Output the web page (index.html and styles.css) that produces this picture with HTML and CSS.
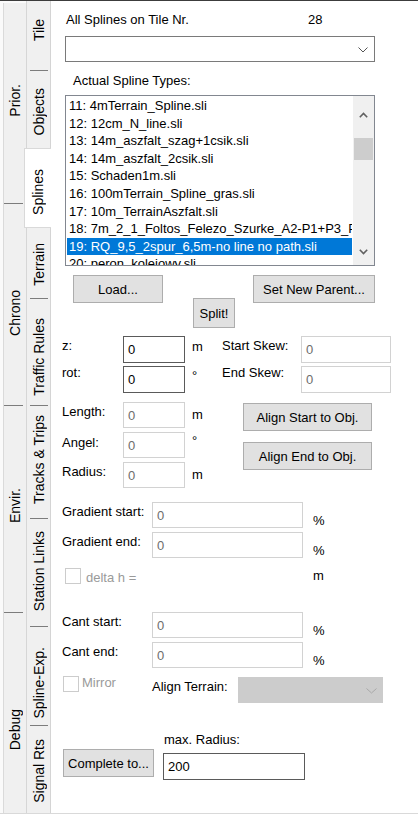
FILE: index.html
```html
<!DOCTYPE html>
<html>
<head>
<meta charset="utf-8">
<title>Splines</title>
<link rel="stylesheet" href="styles.css">
</head>
<body>
<div class="app">
  <div class="outer">
    <div class="otab t-prior"><span class="vt">Prior.</span></div>
    <div class="otab t-chrono"><span class="vt">Chrono</span></div>
    <div class="otab t-envir"><span class="vt">Envir.</span></div>
    <div class="otab t-debug"><span class="vt">Debug</span></div>
  </div>
  <div class="inner">
    <div class="itab t-tile"><span class="vt">Tile</span></div>
    <div class="itab t-objects"><span class="vt">Objects</span></div>
    <div class="itab t-splines selected"><span class="vt">Splines</span></div>
    <div class="itab t-terrain"><span class="vt">Terrain</span></div>
    <div class="itab t-traffic"><span class="vt">Traffic Rules</span></div>
    <div class="itab t-tracks"><span class="vt">Tracks &amp; Trips</span></div>
    <div class="itab t-station"><span class="vt">Station Links</span></div>
    <div class="itab t-splexp"><span class="vt">Spline-Exp.</span></div>
    <div class="itab t-signal"><span class="vt">Signal Rts</span></div>
  </div>

  <div class="panel">
    <div class="title"><span class="title-text">All Splines on Tile Nr.</span><span>28</span></div>

    <div class="combo">
      <svg class="chev" width="10" height="6" viewBox="0 0 10 6"><polyline points="0.5,0.5 5,5 9.5,0.5" fill="none" stroke="#555" stroke-width="1"/></svg>
    </div>

    <div class="caption">Actual Spline Types:</div>

    <div class="list">
      <div class="items">
        <div class="item">11: 4mTerrain_Spline.sli</div>
        <div class="item">12: 12cm_N_line.sli</div>
        <div class="item">13: 14m_aszfalt_szag+1csik.sli</div>
        <div class="item">14: 14m_aszfalt_2csik.sli</div>
        <div class="item">15: Schaden1m.sli</div>
        <div class="item">16: 100mTerrain_Spline_gras.sli</div>
        <div class="item">17: 10m_TerrainAszfalt.sli</div>
        <div class="item">18: 7m_2_1_Foltos_Felezo_Szurke_A2-P1+P3_P4.sli</div>
        <div class="item sel">19: RQ_9,5_2spur_6,5m-no line no path.sli</div>
        <div class="item">20: peron_kolejowy.sli</div>
      </div>
      <div class="scroll">
        <div class="arrow up">
          <svg width="9" height="6" viewBox="0 0 9 6"><polyline points="0.8,5.2 4.5,1.5 8.2,5.2" fill="none" stroke="#606060" stroke-width="1.6"/></svg>
        </div>
        <div class="thumb"></div>
        <div class="arrow down">
          <svg width="9" height="6" viewBox="0 0 9 6"><polyline points="0.8,0.8 4.5,4.5 8.2,0.8" fill="none" stroke="#606060" stroke-width="1.6"/></svg>
        </div>
      </div>
    </div>

    <div class="btnrow">
      <div class="btn b-load">Load...</div>
      <div class="btn b-split">Split!</div>
      <div class="btn b-parent">Set New Parent...</div>
    </div>

    <div class="row row-z">
      <div class="lbl w61 pt2">z:</div>
      <div class="tb on w62 h27">0</div>
      <div class="unit u30 pt3">m</div>
      <div class="lbl w79 pt2">Start Skew:</div>
      <div class="tb w90 h27">0</div>
    </div>

    <div class="row row-rot">
      <div class="lbl w61 up1">rot:</div>
      <div class="tb on w62 h27">0</div>
      <div class="unit u30 pt2">°</div>
      <div class="lbl w79 up1">End Skew:</div>
      <div class="tb w90 h27">0</div>
    </div>

    <div class="geo">
      <div class="geo-left">
        <div class="row">
          <div class="lbl w61 pt2">Length:</div>
          <div class="tb w62 h26">0</div>
          <div class="unit pt5">m</div>
        </div>
        <div class="row">
          <div class="lbl w61 pt3">Angel:</div>
          <div class="tb w62 h26">0</div>
          <div class="unit pt1">°</div>
        </div>
        <div class="row">
          <div class="lbl w61 pt2">Radius:</div>
          <div class="tb w62 h26">0</div>
          <div class="unit pt5">m</div>
        </div>
      </div>
      <div class="geo-right">
        <div class="btn b-align1">Align Start to Obj.</div>
        <div class="btn b-align2">Align End to Obj.</div>
      </div>
    </div>

    <div class="row row-g1">
      <div class="lbl w90 pt2">Gradient start:</div>
      <div class="tb w151 h26">0</div>
      <div class="unit pct">%</div>
    </div>
    <div class="row row-g2">
      <div class="lbl w90 pt2">Gradient end:</div>
      <div class="tb w151 h26">0</div>
      <div class="unit pct">%</div>
    </div>

    <div class="row row-delta">
      <div class="cb cb-delta"></div>
      <div class="dis delta-text pt2">delta h =</div>
      <div class="unit">m</div>
    </div>

    <div class="row row-c1">
      <div class="lbl w90 pt2">Cant start:</div>
      <div class="tb w151 h26">0</div>
      <div class="unit pct">%</div>
    </div>
    <div class="row row-c2">
      <div class="lbl w90 pt2">Cant end:</div>
      <div class="tb w151 h26">0</div>
      <div class="unit pct">%</div>
    </div>

    <div class="row row-mirror">
      <div class="cb cb-mirror"></div>
      <div class="dis mirror-text">Mirror</div>
      <div class="lbl w86 pt3">Align Terrain:</div>
      <div class="combo-dis">
        <svg width="11" height="6" viewBox="0 0 11 6"><polyline points="0.5,0.5 5.5,5 10.5,0.5" fill="none" stroke="#a8a8a8" stroke-width="1"/></svg>
      </div>
    </div>

    <div class="maxrad">max. Radius:</div>

    <div class="row row-complete">
      <div class="btn b-complete">Complete to...</div>
      <div class="tb on w142 h27 tb-rad">200</div>
    </div>
  </div>
</div>
</body>
</html>
```

FILE: styles.css
```css
html, body {
  margin: 0;
  padding: 0;
  background: #ffffff;
}

body {
  font-family: "Liberation Sans", Arial, sans-serif;
  font-size: 13px;
  line-height: 15px;
  color: #000000;
}

.app {
  display: flex;
  height: 814px;
  box-sizing: border-box;
  border-top: 1px solid #3c3c3c;
  border-bottom: 1px solid #d9d9d9;
}

/* ---------- vertical tab strips ---------- */
.vt {
  display: block;
  writing-mode: vertical-rl;
  transform: rotate(180deg);
  line-height: 1;
  font-size: 14px;
  white-space: nowrap;
}

.outer {
  width: 27px;
  flex: none;
  box-sizing: border-box;
  padding-top: 2px;
  padding-left: 3px;
  border-right: 1px solid #d6d6d6;
  display: flex;
  flex-direction: column;
  background: #fafafa;
}

.otab {
  position: relative;
  background: #f0f0f0;
  border-left: 1px solid #dadada;
  display: flex;
  align-items: center;
  justify-content: center;
  box-sizing: border-box;
}

.otab + .otab::before,
.itab + .itab::before {
  content: "";
  position: absolute;
  top: 0;
  height: 1px;
  background: #7c7c7c;
}

.otab + .otab::before {
  left: 0;
  right: 3px;
}

.t-prior  { height: 200px; padding-bottom: 6px; }
.t-chrono { height: 202px; padding-top: 18px; }
.t-envir  { height: 207px; padding-bottom: 6px; }
.t-debug  { flex: 1; padding-top: 34px; }

.inner {
  width: 23px;
  flex: none;
  box-sizing: border-box;
  padding-top: 2px;
  display: flex;
  flex-direction: column;
  background: #f0f0f0;
}

.itab {
  position: relative;
  display: flex;
  align-items: center;
  justify-content: center;
  box-sizing: border-box;
}

.itab + .itab::before {
  left: 3px;
  right: 2px;
}

.t-tile    { height: 67px; padding-bottom: 13px; }
.t-objects { height: 78px; padding-top: 6px; }
.t-splines { height: 80px; padding-top: 8px; }
.t-terrain { height: 70px; padding-top: 2px; }
.t-traffic { height: 107px; padding-top: 11px; }
.t-tracks  { height: 113px; padding-bottom: 5px; }
.t-station { height: 108px; padding-bottom: 2px; }
.t-splexp  { height: 99px; padding-top: 15px; }
.t-signal  { flex: 1; padding-top: 4px; }

.itab.selected {
  background: #ffffff;
  margin-left: -3px;
  margin-right: -1px;
  border: 1px solid #d9d9d9;
  border-right: none;
  z-index: 2;
}

.itab.selected::before,
.itab.selected + .itab::before {
  display: none;
}

/* ---------- main panel ---------- */
.panel {
  flex: 1;
  border-left: 1px solid #d4d4d4;
  padding-top: 11px;
  padding-left: 11px;
  box-sizing: border-box;
}

.title {
  display: flex;
  height: 15px;
  margin-left: 4px;
}

.title-text {
  width: 242px;
}

.combo {
  margin-top: 9px;
  margin-left: 3px;
  width: 310px;
  height: 26px;
  box-sizing: border-box;
  border: 1px solid #7a7a7a;
  display: flex;
  align-items: center;
  justify-content: flex-end;
  padding-right: 6px;
  padding-top: 1px;
}

.caption {
  margin-top: 11px;
  margin-left: 11px;
  height: 15px;
}

/* list box */
.list {
  margin-top: 7px;
  margin-left: 3px;
  width: 310px;
  height: 171px;
  box-sizing: border-box;
  border: 1px solid #828790;
  display: flex;
  overflow: hidden;
}

.items {
  flex: 1;
  min-width: 0;
  padding: 1px 1px 0 1px;
  overflow: hidden;
}

.item {
  height: 17.6px;
  line-height: 17.6px;
  padding-left: 2px;
  white-space: nowrap;
  overflow: hidden;
}

.item.sel {
  background: #0078d7;
  color: #ffffff;
}

.scroll {
  width: 21px;
  flex: none;
  background: #f0f0f0;
  display: flex;
  flex-direction: column;
  align-items: center;
}

.arrow {
  width: 100%;
  display: flex;
  align-items: center;
  justify-content: center;
}

.arrow.up {
  height: 38px;
}

.arrow.down {
  height: 25px;
  margin-top: auto;
  padding-bottom: 1px;
}

.thumb {
  margin-top: 4px;
  width: 19px;
  height: 22px;
  background: #cdcdcd;
}

/* buttons */
.btn {
  box-sizing: border-box;
  background: #e1e1e1;
  border: 1px solid #adadad;
  display: flex;
  align-items: center;
  justify-content: center;
  white-space: nowrap;
}

.btnrow {
  margin-top: 9px;
  margin-left: 11px;
  height: 53px;
  display: flex;
  align-items: flex-start;
}

.b-load   { width: 90px; height: 28px; }
.b-split  { width: 42px; height: 30px; margin-left: 30px; margin-top: 23px; }
.b-parent { width: 122px; height: 28px; margin-left: 18px; }

/* generic rows */
.row {
  display: flex;
  align-items: flex-start;
}

.lbl { flex: none; white-space: nowrap; }
.w61 { width: 61px; }
.w79 { width: 79px; }
.w86 { width: 86px; }
.w90 { width: 90px; }

.pt1 { padding-top: 1px; }
.pt2 { padding-top: 2px; }
.pt3 { padding-top: 3px; }
.pt5 { padding-top: 5px; }
.up1 { margin-top: -1px; }

.tb {
  flex: none;
  box-sizing: border-box;
  border: 1px solid #d2d2d2;
  background: #ffffff;
  color: #6d6d6d;
  padding-left: 4px;
  display: flex;
  align-items: center;
}

.tb.on {
  border-color: #5a5a5a;
  color: #000000;
}

.w62  { width: 62px; }
.w90.tb { width: 90px; }
.w142 { width: 142px; }
.w151 { width: 151px; }
.h26  { height: 26px; }
.h27  { height: 27px; }

.unit {
  flex: none;
  margin-left: 7px;
}

.u30 { width: 30px; }

.pct {
  margin-left: 10px;
  padding-top: 11px;
}

.row-z     { margin-top: 8px; height: 27px; }
.row-rot   { margin-top: 3px; height: 27px; }

.geo {
  margin-top: 9px;
  display: flex;
}

.geo-left {
  width: 181px;
  display: flex;
  flex-direction: column;
  gap: 4px;
}

.geo-left .row { height: 26px; }

.geo-right {
  display: flex;
  flex-direction: column;
}

.b-align1 { width: 129px; height: 28px; margin-top: 1px; }
.b-align2 { width: 129px; height: 28px; margin-top: 11px; }

.row-g1 { margin-top: 14px; height: 26px; }
.row-g2 { margin-top: 4px; height: 26px; }

.cb {
  flex: none;
  box-sizing: border-box;
  border: 1px solid #cccccc;
  background: #ffffff;
}

.dis { color: #9a9a9a; flex: none; }

.row-delta { margin-top: 10px; height: 16px; }
.cb-delta { width: 16px; height: 16px; margin-left: 3px; }
.delta-text { margin-left: 5px; width: 227px; }
.row-delta .unit { margin-left: 0; }

.row-c1 { margin-top: 28px; height: 26px; }
.row-c2 { margin-top: 4px; height: 26px; }

.row-mirror { margin-top: 8px; height: 27px; }
.cb-mirror { width: 16px; height: 16px; margin-left: 1px; }
.mirror-text { margin-left: 3px; width: 70px; margin-top: -1px; }

.combo-dis {
  flex: none;
  width: 145px;
  height: 26px;
  margin-top: 1px;
  box-sizing: border-box;
  background: #cccccc;
  border: 1px solid #cccccc;
  display: flex;
  align-items: center;
  justify-content: flex-end;
  padding-right: 5px;
  padding-top: 2px;
}

.maxrad {
  margin-top: 29px;
  margin-left: 102px;
  height: 15px;
}

.row-complete { margin-top: 2px; height: 31px; }
.b-complete { width: 91px; height: 28px; margin-left: 1px; }
.tb-rad { margin-left: 9px; margin-top: 4px; }
```
